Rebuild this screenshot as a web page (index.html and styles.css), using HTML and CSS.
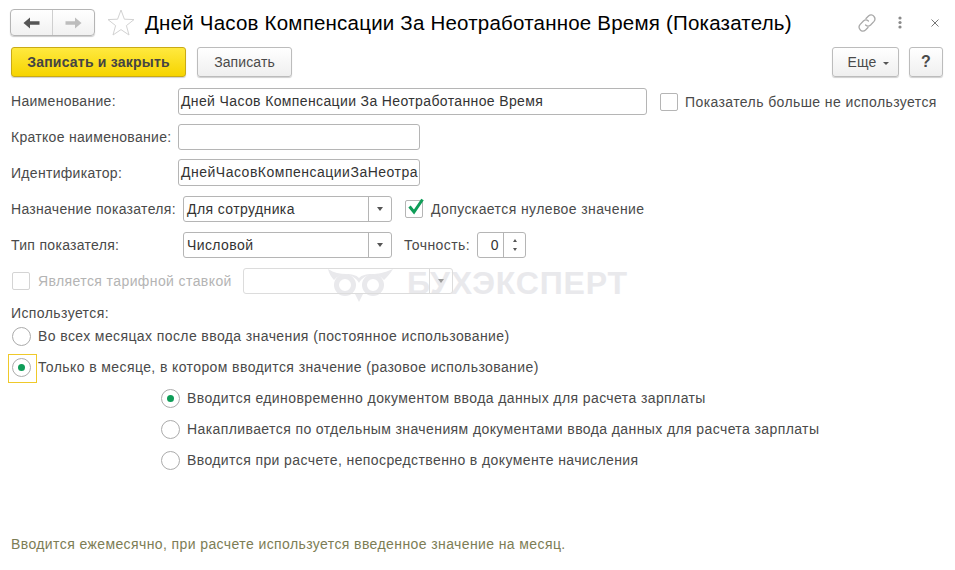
FILE: index.html
```html
<!DOCTYPE html>
<html lang="ru">
<head>
<meta charset="utf-8">
<title>Показатель</title>
<link rel="stylesheet" href="styles.css">
</head>
<body>
<div class="page">
  <div class="watermark">
    <svg class="owl" width="68" height="34" viewBox="0 0 68 34"><g fill="none" stroke="#e9e9ec"><circle cx="17" cy="16" r="8.5" stroke-width="5"/><circle cx="45" cy="16" r="8.5" stroke-width="5"/></g><path d="M0 0 C6 4 12 5 18 5 C24 5 28 6 31 9 C34 6 38 5 44 5 C50 5 56 4 65 0 C62 5 59 8 56 11 C52 6 47 5 42 6 C37 7 33 10 31 14 C29 10 25 7 20 6 C15 5 10 6 6 11 C3 8 1 4 0 0 Z M27 25 H35 L31 33 Z" fill="#e9e9ec"/></svg>
    <span class="wm-text">БУХЭКСПЕРТ</span>
  </div>

  <header class="titlebar">
    <div class="nav">
      <span class="nav-btn"><svg width="17" height="12" viewBox="0 0 17 12"><path d="M0.5 6 L7 .5 V4.2 H16.5 V7.8 H7 V11.5 Z" fill="#555"/></svg></span>
      <span class="nav-btn"><svg width="17" height="12" viewBox="0 0 17 12"><path d="M16.5 6 L10 .5 V4.2 H.5 V7.8 H10 V11.5 Z" fill="#bdbdbd"/></svg></span>
    </div>
    <svg class="star" width="28" height="27" viewBox="0 0 28 27"><path d="M14 1 L17.4 10.2 L27 10.6 L19.4 16.6 L22 26 L14 20.6 L6 26 L8.6 16.6 L1 10.6 L10.6 10.2 Z" fill="none" stroke="#d2d2d2"/></svg>
    <h1 class="title">Дней Часов Компенсации За Неотработанное Время (Показатель)</h1>
    <div class="window-tools">
      <svg width="20" height="20" viewBox="0 0 20 20"><g fill="none" stroke="#a8a8a8" stroke-width="1.3" stroke-linecap="round"><path d="M9 5.5 L11.5 3 C13.2 1.4 15.4 1.5 16.8 3.2 C18.3 4.9 18.2 7 16.8 8.6 L13.6 12 C12 13.4 10 13.3 8.6 12"/><path d="M11 14.5 L8.5 17 C6.8 18.6 4.6 18.5 3.2 16.8 C1.7 15.1 1.8 13 3.2 11.4 L6.4 8 C8 6.6 10 6.7 11.4 8"/></g></svg>
      <svg class="dots" width="4" height="13" viewBox="0 0 4 13"><circle cx="2" cy="2" r="1.6" fill="#8a8a8a"/><circle cx="2" cy="6.5" r="1.6" fill="#8a8a8a"/><circle cx="2" cy="11" r="1.6" fill="#8a8a8a"/></svg>
      <svg class="close" width="8" height="8" viewBox="0 0 8 8"><path d="M.5 .5 L7.5 7.5 M7.5 .5 L.5 7.5" stroke="#777" stroke-width="1"/></svg>
    </div>
  </header>

  <div class="toolbar">
    <button class="btn btn-primary">Записать и закрыть</button>
    <button class="btn btn-save">Записать</button>
    <span class="spacer"></span>
    <button class="btn btn-more">Еще <span class="caret"></span></button>
    <button class="btn btn-help">?</button>
  </div>

  <div class="row row-name">
    <label class="label label-name">Наименование:</label>
    <div class="field field-name">Дней Часов Компенсации За Неотработанное Время</div>
    <span class="check check-unused"></span>
    <span>Показатель больше не используется</span>
  </div>
  <div class="row row-short">
    <label class="label">Краткое наименование:</label>
    <div class="field field-short"></div>
  </div>
  <div class="row row-id">
    <label class="label">Идентификатор:</label>
    <div class="field field-short field-id">ДнейЧасовКомпенсацииЗаНеотра</div>
  </div>
  <div class="row row-purpose">
    <label class="label label-select">Назначение показателя:</label>
    <div class="select"><span class="select-value">Для сотрудника</span><span class="select-btn"><span class="caret"></span></span></div>
    <span class="check check-on"><svg width="19" height="19" viewBox="0 0 19 19"><path d="M3.5 9.5 L8 15 L16.5 2.5" fill="none" stroke="#0f9d58" stroke-width="3"/></svg></span>
    <span>Допускается нулевое значение</span>
  </div>
  <div class="row row-type">
    <label class="label label-select">Тип показателя:</label>
    <div class="select"><span class="select-value">Числовой</span><span class="select-btn"><span class="caret"></span></span></div>
    <span class="precision-label">Точность:</span>
    <div class="spinner"><span class="spinner-value">0</span><span class="spinner-btns"><span class="up"></span><span class="down"></span></span></div>
  </div>
  <div class="row row-tariff">
    <span class="check check-off"></span>
    <span class="muted tariff-label">Является тарифной ставкой</span>
    <div class="select select-off"><span class="select-value"></span><span class="select-btn"><span class="caret"></span></span></div>
  </div>

  <div class="used-title">Используется:</div>
  <div class="radio-row radio-first"><span class="radio"></span><span>Во всех месяцах после ввода значения (постоянное использование)</span></div>
  <div class="radio-row radio-second"><span class="focus"><span class="radio radio-on"></span></span><span>Только в месяце, в котором вводится значение (разовое использование)</span></div>
  <div class="sub-options">
    <div class="radio-row"><span class="radio radio-on"></span><span>Вводится единовременно документом ввода данных для расчета зарплаты</span></div>
    <div class="radio-row"><span class="radio"></span><span>Накапливается по отдельным значениям документами ввода данных для расчета зарплаты</span></div>
    <div class="radio-row"><span class="radio"></span><span>Вводится при расчете, непосредственно в документе начисления</span></div>
  </div>
  <div class="hint">Вводится ежемесячно, при расчете используется введенное значение на месяц.</div>
</div>
</body>
</html>
```
FILE: styles.css
```css
* { box-sizing: border-box; }
html, body { margin: 0; padding: 0; background: #fff; }
body { font-family: "Liberation Sans", Arial, sans-serif; font-size: 14px; letter-spacing: 0.4px; color: #4a4a4a; }
.page { position: relative; width: 955px; height: 570px; overflow: hidden; padding: 9px 12px 0 11px; }

.watermark { position: absolute; left: 328px; top: 268px; display: flex; align-items: flex-start; gap: 11px; z-index: 0; }
.owl { display: block; margin-top: 1px; }
.wm-text { font-size: 32px; line-height: 30px; font-weight: 700; color: #e9e9ec; letter-spacing: 0.85px; }

.titlebar { display: flex; align-items: center; height: 27px; position: relative; z-index: 1; }
.nav { display: flex; width: 85px; height: 27px; margin-left: -1px; border: 1px solid #b5b5b5; border-radius: 4px; background: linear-gradient(#fff, #f1f1f1); box-shadow: 0 1px 1px #ccc; }
.nav-btn { flex: 1; display: flex; align-items: center; justify-content: center; }
.nav-btn + .nav-btn { border-left: 1px solid #cfcfcf; }
.star { margin-left: 12px; }
.title { margin: 0 0 0 10px; font-size: 20.5px; font-weight: 400; color: #000; white-space: nowrap; letter-spacing: 0.21px; }
.window-tools { margin-left: auto; display: flex; align-items: center; margin-right: 1px; }
.window-tools .dots { margin-left: 21px; }
.window-tools .close { margin-left: 29px; margin-right: 3px; }

.toolbar { display: flex; margin-top: 11px; height: 30px; position: relative; z-index: 1; }
.spacer { flex: 1; }
.btn { height: 30px; padding: 0; border: 1px solid #bcbcbc; border-radius: 3px; background: linear-gradient(#fff, #efefef); font: 14px "Liberation Sans", Arial, sans-serif; letter-spacing: 0.1px; color: #4a4a4a; box-shadow: 0 1px 1px #d0d0d0; }
.btn-primary { width: 175px; border-color: #c9aa16; background: linear-gradient(#ffe93f, #f6d400); font-weight: 700; letter-spacing: 0.22px; color: #444; }
.btn-save { width: 95px; margin-left: 11px; }
.btn-more { width: 67px; padding-left: 6px; }
.btn-help { width: 34px; margin-left: 10px; font-weight: 700; font-size: 16px; }
.caret { display: inline-block; width: 0; height: 0; border: 3px solid transparent; border-top: 3px solid #555; border-bottom: 0; vertical-align: middle; }
.btn-more .caret { margin-left: 3px; }

.row { display: flex; align-items: center; position: relative; z-index: 1; }
.label { flex: none; width: 167px; white-space: nowrap; letter-spacing: 0.3px; }
.label-name { padding-bottom: 2px; }
.label-select { width: 172px; }
.row-name { margin-top: 11px; height: 27px; }
.row-short { margin-top: 9px; height: 26px; }
.row-id { margin-top: 9px; height: 27px; }
.row-purpose { margin-top: 10px; height: 26px; }
.row-type { margin-top: 10px; height: 26px; }
.row-tariff { margin-top: 10px; height: 26px; }

.field { height: 100%; border: 1px solid #b5b5b5; border-radius: 3px; padding: 0 2px 0 2px; line-height: 25px; overflow: hidden; white-space: nowrap; background: #fff; color: #333; letter-spacing: 0.37px; }
.field-name { width: 469px; }
.field-short { width: 242px; }
.field-id { letter-spacing: 0.5px; }

.check { flex: none; display: block; width: 18px; height: 18px; border: 1px solid #b5b5b5; border-radius: 2px; background: #fff; position: relative; }
.check svg { position: absolute; left: 0; top: -4px; }
.check-unused { margin: 0 7px 0 13px; }
.check-on { margin: 0 8px 0 13px; }
.check-off { margin: 0 8px 0 1px; border-color: #d4d4d4; }
.muted { color: #b4b4b4; }
.tariff-label { width: 205px; white-space: nowrap; }

.select { width: 209px; height: 100%; display: flex; border: 1px solid #b5b5b5; border-radius: 3px; background: #fff; color: #333; }
.select-value { flex: 1; padding-left: 3px; line-height: 24px; }
.select-btn { width: 23px; border-left: 1px solid #b5b5b5; display: flex; align-items: center; justify-content: center; }
.select-btn .caret { border-width: 4px 3.5px 0; border-top-color: #555; }
.select-off { width: 210px; border-color: #dcdcdc; background: transparent; }
.select-off .select-btn { border-left-color: #dcdcdc; }
.select-off .caret { border-top-color: #999; }

.precision-label { margin-left: 12px; width: 73px; }
.spinner { width: 49px; height: 100%; display: flex; border: 1px solid #b5b5b5; border-radius: 3px; color: #333; }
.spinner-value { flex: 1; text-align: right; padding-right: 4px; line-height: 24px; }
.spinner-btns { width: 22px; border-left: 1px solid #b5b5b5; display: flex; flex-direction: column; align-items: center; justify-content: center; gap: 6px; }
.up, .down { width: 0; height: 0; border-left: 2.5px solid transparent; border-right: 2.5px solid transparent; }
.up { border-bottom: 3px solid #555; }
.down { border-top: 3px solid #555; }

.used-title { margin-top: 11px; height: 16px; line-height: 16px; position: relative; z-index: 1; }
.radio-row { display: flex; align-items: center; height: 20px; white-space: nowrap; position: relative; z-index: 1; }
.radio-row > span:last-child { margin-left: 7px; }
.radio-first { margin-top: 5px; padding-left: 1px; }
.radio-second { margin-top: 11px; padding-left: 1px; }
.radio { flex: none; display: flex; align-items: center; justify-content: center; width: 19px; height: 19px; border: 1px solid #ababab; border-radius: 50%; background: #fff; }
.radio-on::after { content: ""; width: 7px; height: 7px; border-radius: 50%; background: #0f9d58; }
.focus { flex: none; width: 19px; height: 19px; position: relative; display: block; }
.focus::before { content: ""; position: absolute; left: -4px; top: -4px; width: 27px; height: 27px; border: 1px solid #efc92a; }
.sub-options { margin: 11px 0 0 150px; display: flex; flex-direction: column; gap: 11px; }
.hint { margin-top: 66px; color: #7d7d55; line-height: 16px; }
```
